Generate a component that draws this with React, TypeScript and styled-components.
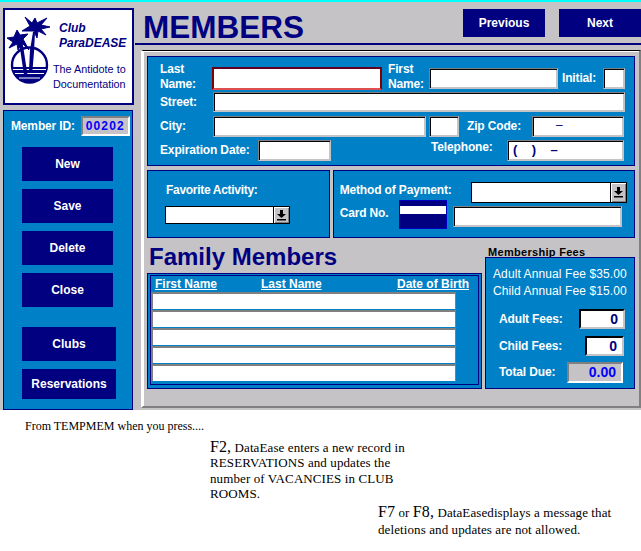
import React from "react";
import styled, { createGlobalStyle } from "styled-components";

const navy = "#000080";
const blue = "#0080c6";
const gray = "#c6c3c6";

function PalmLogo() {
  return (
    <LogoSvg viewBox="0 0 50 76" width="50" height="76">
      <circle cx="25.500" cy="53" r="17.500" fill="#fff" stroke={navy} strokeWidth="2.400" />
      <path d="M8.100 55h34.800a17.500 17.500 0 0 1-34.800 0z" fill={navy} />
      <path d="M9 57.500h33M11 61.500h29M15 66h21" stroke="#fff" strokeWidth="1.200" />
      <path d="M29 20l2 0-1 20-1.500 18-3.500 0 1-20z" fill={navy} />
      <path d="M15 30l3.500 0 5 33-3.500 0z" fill={navy} />
      <path
        d="M21 5l7 6 3-5 2 5 10-5-6 7 9 2-9 2 5 6-8-4-1 7-3-7-12 0 8-5z"
        fill={navy}
        stroke={navy}
        strokeWidth="1"
      />
      <path
        d="M13 18l3 5 8-1-5 5 6 11-7-7-4 7-1-6-8 4 4-6-6-4 7-1z"
        fill={navy}
        stroke={navy}
        strokeWidth="1"
      />
    </LogoSvg>
  );
}

function Arrow() {
  return (
    <ArrowSvg viewBox="0 0 9 11" width="9" height="11">
      <path d="M3 0h3v4h3L4.500 8 0 4h3z" fill="#000" />
      <rect x="0" y="9" width="9" height="1.500" fill="#000" />
    </ArrowSvg>
  );
}

function Select({ $width, $height }: { $width: number; $height: number }) {
  return (
    <SelectBox $width={$width} $height={$height}>
      <SelectButton>
        <Arrow />
      </SelectButton>
    </SelectBox>
  );
}

export default function App() {
  return (
    <>
      <GlobalStyle />
      <Window>
        <LeftColumn>
          <LogoBox>
            <PalmLogo />
            <BrandName>
              Club
              <br />
              ParaDEASE
            </BrandName>
            <Tagline>
              The Antidote to
              <br />
              Documentation
            </Tagline>
          </LogoBox>
          <SidePanel>
            <MemberRow>
              <Label>Member ID:</Label>
              <MemberId>00202</MemberId>
            </MemberRow>
            <NavButton>New</NavButton>
            <NavButton>Save</NavButton>
            <NavButton>Delete</NavButton>
            <NavButton>Close</NavButton>
            <NavButton $wide $top={12}>
              Clubs
            </NavButton>
            <NavButton $wide $height={30}>
              Reservations
            </NavButton>
          </SidePanel>
        </LeftColumn>

        <RightColumn>
          <TitleBar>
            <Title>MEMBERS</Title>
            <TopButton $left={160}>Previous</TopButton>
            <TopButton $left={14}>Next</TopButton>
          </TitleBar>

          <Sunken>
            <Section>
              <FormRow $height={31}>
                <Label $width={52}>
                  Last
                  <br />
                  Name:
                </Label>
                <Input $width={170} $height={23} $down={4} $focus />
                <Label $width={41} $left={6}>
                  First
                  <br />
                  Name:
                </Label>
                <Input $width={129} $height={21} $down={4} />
                <Label $width={41} $left={4} $down={3}>
                  Initial:
                </Label>
                <Input $width={22} $height={21} $down={4} />
              </FormRow>
              <FormRow $height={20}>
                <Label $width={53}>Street:</Label>
                <Input $width={412} $height={20} />
              </FormRow>
              <FormRow $height={21} $top={4}>
                <Label $width={53}>City:</Label>
                <Input $width={213} $height={21} />
                <Input $width={30} $height={21} $left={3} />
                <Label $width={65} $left={8}>
                  Zip Code:
                </Label>
                <Input $width={92} $height={21} $pad={23}>
                  –
                </Input>
              </FormRow>
              <FormRow $height={21} $top={3}>
                <Label $width={98}>Expiration Date:</Label>
                <Input $width={73} $height={21} />
                <Label $width={76} $left={100} $lift={6}>
                  Telephone:
                </Label>
                <Input $width={117} $height={21} $pad={5} $bold>
                  {"(    )    –"}
                </Input>
              </FormRow>
            </Section>

            <SplitRow>
              <ActivityCard>
                <CardLabel>Favorite Activity:</CardLabel>
                <Select $width={125} $height={18} />
              </ActivityCard>
              <PaymentCard>
                <PaymentRow $height={21}>
                  <Label $width={131} $lift={5}>
                    Method of Payment:
                  </Label>
                  <Select $width={156} $height={21} />
                </PaymentRow>
                <PaymentRow $height={24}>
                  <Label $width={59} $lift={4}>
                    Card No.
                  </Label>
                  <CardSwatch />
                  <Input $width={169} $height={21} $left={6} $down={3} />
                </PaymentRow>
              </PaymentCard>
            </SplitRow>

            <LowerRow>
              <FamilyColumn>
                <FamilyTitle>Family Members</FamilyTitle>
                <TableFrame>
                  <TableInner>
                    <TableHead>
                      <HeadCell $width={106}>First Name</HeadCell>
                      <HeadCell $width={136}>Last Name</HeadCell>
                      <HeadCell $width={70}>Date of Birth</HeadCell>
                    </TableHead>
                    {[0, 1, 2, 3, 4].map((i) => (
                      <TableRow key={i} />
                    ))}
                  </TableInner>
                </TableFrame>
              </FamilyColumn>
              <FeesColumn>
                <FeesHeading>Membership Fees</FeesHeading>
                <FeesCard>
                  <FeeNote>Adult Annual Fee $35.00</FeeNote>
                  <FeeNote>Child Annual Fee $15.00</FeeNote>
                  <FeeRow $top={9}>
                    <Label>Adult Fees:</Label>
                    <FeeValue $width={46}>0</FeeValue>
                  </FeeRow>
                  <FeeRow $top={7} $right={1}>
                    <Label>Child Fees:</Label>
                    <FeeValue $width={39}>0</FeeValue>
                  </FeeRow>
                  <FeeRow $top={6} $right={2}>
                    <Label>Total Due:</Label>
                    <FeeValue $width={56} $total>
                      0.00
                    </FeeValue>
                  </FeeRow>
                </FeesCard>
              </FeesColumn>
            </LowerRow>
          </Sunken>
        </RightColumn>
      </Window>

      <Notes>
        <Note $left={25}>From TEMPMEM when you press....</Note>
        <Note $left={210} $top={4} $size={13}>
          <Key>F2,</Key> DataEase enters a new record in
          <br />
          RESERVATIONS and updates the
          <br />
          number of VACANCIES in CLUB
          <br />
          ROOMS.
        </Note>
        <Note $left={378} $top={1} $size={13} $line={17.5}>
          <Key>F7</Key> or <Key>F8,</Key> DataEasedisplays a message that
          <br />
          deletions and updates are not allowed.
        </Note>
      </Notes>
    </>
  );
}

const GlobalStyle = createGlobalStyle`
  html, body {
    margin: 0;
    padding: 0;
    background: #ffffff;
  }
  body {
    font-family: "Liberation Sans", Arial, sans-serif;
    font-size: 12px;
  }
`;

const Window = styled.div`
  display: flex;
  width: 641px;
  height: 408px;
  background: ${gray};
  border-top: 2px solid #00ffff;
  overflow: hidden;
`;

const LeftColumn = styled.div`
  display: flex;
  flex-direction: column;
  width: 130px;
  margin-left: 3px;
  padding-top: 6px;
  flex-shrink: 0;
`;

const LogoBox = styled.div`
  position: relative;
  box-sizing: border-box;
  width: 131px;
  height: 97px;
  border: 2px solid ${navy};
  background: #ffffff;
  color: ${navy};
`;

const LogoSvg = styled.svg`
  position: absolute;
  left: -1px;
  top: 2px;
`;

const BrandName = styled.div`
  position: absolute;
  left: 54px;
  top: 11px;
  font-size: 12px;
  line-height: 15px;
  font-weight: bold;
  font-style: italic;
`;

const Tagline = styled.div`
  position: absolute;
  left: 48px;
  top: 52px;
  font-size: 10.800px;
  line-height: 14.500px;
  white-space: nowrap;
`;

const SidePanel = styled.div`
  box-sizing: border-box;
  display: flex;
  flex-direction: column;
  align-items: flex-start;
  gap: 8px;
  width: 130px;
  height: 300px;
  margin-top: 5px;
  padding: 5px 0 0 18px;
  background: ${blue};
  border: 1px solid ${navy};
`;

const MemberRow = styled.div`
  display: flex;
  align-items: center;
  justify-content: space-between;
  width: 119px;
  height: 20px;
  margin: 0 0 3px -11px;
`;

const Label = styled.span<{ $width?: number; $left?: number; $lift?: number; $down?: number }>`
  display: block;
  flex-shrink: 0;
  width: ${(p) => (p.$width ? `${p.$width}px` : "auto")};
  margin-left: ${(p) => p.$left ?? 0}px;
  margin-top: ${(p) => p.$down ?? 0}px;
  margin-bottom: ${(p) => p.$lift ?? 0}px;
  color: #ffffff;
  font-size: 12px;
  line-height: 15px;
  font-weight: bold;
  letter-spacing: -0.150px;
  white-space: nowrap;
`;

const MemberId = styled.div`
  box-sizing: border-box;
  width: 49px;
  height: 20px;
  padding-right: 3px;
  background: ${gray};
  border: 2px solid;
  border-color: #808080 #ffffff #ffffff #808080;
  color: #0000ff;
  font-size: 12px;
  font-weight: bold;
  line-height: 16px;
  letter-spacing: 1.200px;
  text-align: right;
`;

const NavButton = styled.div<{ $wide?: boolean; $top?: number; $height?: number }>`
  display: flex;
  align-items: center;
  justify-content: center;
  width: ${(p) => (p.$wide ? 94 : 91)}px;
  height: ${(p) => p.$height ?? 34}px;
  margin-top: ${(p) => p.$top ?? 0}px;
  flex-shrink: 0;
  background: ${navy};
  color: #ffffff;
  font-size: 12px;
  font-weight: bold;
`;

const RightColumn = styled.div`
  display: flex;
  flex-direction: column;
  flex: 1;
  min-width: 0;
  margin-left: 5px;
`;

const TitleBar = styled.div`
  display: flex;
  align-items: flex-start;
  flex-shrink: 0;
  height: 34px;
  margin-left: -3px;
  padding: 7px 0 0 8px;
  border-bottom: 2px solid ${navy};
`;

const Title = styled.h1`
  width: 160px;
  margin: 1px 0 0;
  color: ${navy};
  font-size: 31.500px;
  line-height: 34px;
  font-weight: bold;
  white-space: nowrap;
`;

const TopButton = styled.div<{ $left: number }>`
  display: flex;
  align-items: center;
  justify-content: center;
  width: 82px;
  height: 28px;
  margin-left: ${(p) => p.$left}px;
  flex-shrink: 0;
  background: ${navy};
  color: #ffffff;
  font-size: 12px;
  font-weight: bold;
`;

const Sunken = styled.div`
  box-sizing: border-box;
  flex: 1;
  margin: 5px 0 2px 3px;
  padding: 5px 4px 0 4px;
  border: 2px solid;
  border-color: #000000 #808080 #808080 #ffffff;
  border-top-width: 1px;
  box-shadow: inset 1px 1px 0 #ffffff;
`;

const Section = styled.div`
  box-sizing: border-box;
  height: 110px;
  padding: 4px 10px 0 12px;
  background: ${blue};
  border: 1px solid ${navy};
`;

const FormRow = styled.div<{ $height: number; $top?: number }>`
  display: flex;
  align-items: center;
  height: ${(p) => p.$height}px;
  margin-top: ${(p) => p.$top ?? 0}px;
`;

const Input = styled.div<{
  $width: number;
  $height: number;
  $left?: number;
  $down?: number;
  $pad?: number;
  $bold?: boolean;
  $focus?: boolean;
}>`
  box-sizing: border-box;
  flex-shrink: 0;
  width: ${(p) => p.$width}px;
  height: ${(p) => p.$height}px;
  margin-left: ${(p) => p.$left ?? 0}px;
  margin-top: ${(p) => p.$down ?? 0}px;
  padding-left: ${(p) => p.$pad ?? 0}px;
  background: #ffffff;
  border: ${(p) => (p.$focus ? 2 : 1)}px solid;
  border-color: ${(p) =>
    p.$focus ? "#600020 #800000 #e05050 #800000" : "#808080 #c6c3c6 #c6c3c6 #808080"};
  box-shadow: ${(p) =>
    p.$focus ? "none" : "inset 1px 1px 0 #000000, inset -1px -1px 0 #c6c3c6"};
  color: ${navy};
  font-size: ${(p) => (p.$bold ? 13 : 12)}px;
  font-weight: ${(p) => (p.$bold ? "bold" : "normal")};
  line-height: 17px;
  white-space: pre;
`;

const SplitRow = styled.div`
  display: flex;
  gap: 3px;
  margin-top: 4px;
`;

const ActivityCard = styled.div`
  box-sizing: border-box;
  width: 183px;
  height: 68px;
  padding: 12px 0 0 17px;
  background: ${blue};
  border: 1px solid ${navy};
`;

const CardLabel = styled.div`
  margin: 0 0 8px 1px;
  color: #ffffff;
  font-size: 12px;
  line-height: 15px;
  font-weight: bold;
  letter-spacing: -0.300px;
`;

const PaymentCard = styled.div`
  box-sizing: border-box;
  width: 303px;
  height: 68px;
  padding: 11px 0 0 6px;
  background: ${blue};
  border: 1px solid ${navy};
`;

const PaymentRow = styled.div<{ $height: number }>`
  display: flex;
  align-items: center;
  height: ${(p) => p.$height}px;
`;

const SelectBox = styled.div<{ $width: number; $height: number }>`
  box-sizing: border-box;
  display: flex;
  justify-content: flex-end;
  flex-shrink: 0;
  width: ${(p) => p.$width}px;
  height: ${(p) => p.$height}px;
  background: #ffffff;
  border: 1px solid #000000;
`;

const SelectButton = styled.div`
  display: flex;
  align-items: center;
  justify-content: center;
  box-sizing: border-box;
  width: 16px;
  background: ${gray};
  border-left: 1px solid #000000;
  box-shadow: inset 1px 1px 0 #ffffff, inset -1px -1px 0 #808080;
`;

const ArrowSvg = styled.svg`
  display: block;
`;

const CardSwatch = styled.div`
  box-sizing: border-box;
  flex-shrink: 0;
  align-self: flex-start;
  width: 48px;
  height: 29px;
  margin-top: -3px;
  background: linear-gradient(
    ${navy} 0,
    ${navy} 5px,
    #ffffff 5px,
    #ffffff 13px,
    ${navy} 13px
  );
  border: 1px solid #0000c0;
`;

const LowerRow = styled.div`
  display: flex;
  gap: 3px;
`;

const FamilyColumn = styled.div`
  width: 336px;
`;

const FamilyTitle = styled.h2`
  box-sizing: border-box;
  height: 30px;
  margin: 0 0 0 2px;
  padding-top: 5px;
  color: ${navy};
  font-size: 24px;
  line-height: 27px;
  font-weight: bold;
  white-space: nowrap;
`;

const TableFrame = styled.div`
  box-sizing: border-box;
  height: 116px;
  margin-top: 5px;
  padding: 1px 2px 3px;
  background: ${blue};
  border: 1px solid ${navy};
`;

const TableInner = styled.div`
  box-sizing: border-box;
  height: 100%;
  border: 1px solid ${navy};
`;

const TableHead = styled.div`
  box-sizing: border-box;
  display: flex;
  height: 16px;
  padding: 1px 0 0 4px;
`;

const HeadCell = styled.span<{ $width: number }>`
  width: ${(p) => p.$width}px;
  flex-shrink: 0;
  color: #ffffff;
  font-size: 12px;
  line-height: 15px;
  font-weight: bold;
  text-decoration: underline;
  white-space: nowrap;
`;

const TableRow = styled.div`
  box-sizing: border-box;
  width: 305px;
  height: 18px;
  background: #ffffff;
  border-top: 2px solid #808080;
  border-left: 2px solid #808080;
  border-right: 1px solid #808080;
  border-bottom: 1px solid ${blue};
`;

const FeesColumn = styled.div`
  display: flex;
  flex-direction: column;
  width: 150px;
`;

const FeesHeading = styled.div`
  height: 14px;
  margin: 5px 0 0 3px;
  color: #000000;
  font-size: 11px;
  line-height: 18px;
  font-weight: bold;
  letter-spacing: 0.300px;
`;

const FeesCard = styled.div`
  box-sizing: border-box;
  height: 132px;
  padding: 8px 9px 0 7px;
  background: ${blue};
  border: 1px solid ${navy};
`;

const FeeNote = styled.div`
  color: #ffffff;
  font-size: 12px;
  line-height: 17px;
  letter-spacing: 0.100px;
  white-space: nowrap;
`;

const FeeRow = styled.div<{ $top: number; $right?: number }>`
  display: flex;
  align-items: center;
  justify-content: space-between;
  margin-top: ${(p) => p.$top}px;
  padding: 0 ${(p) => p.$right ?? 0}px 0 6px;
`;

const FeeValue = styled.div<{ $width: number; $total?: boolean }>`
  box-sizing: border-box;
  width: ${(p) => p.$width}px;
  height: ${(p) => (p.$total ? 21 : 20)}px;
  padding-right: 5px;
  background: ${(p) => (p.$total ? gray : "#ffffff")};
  border: 2px solid;
  border-color: ${(p) =>
    p.$total ? "#808080 #ffffff #ffffff #808080" : "#000000 #c6c3c6 #c6c3c6 #000000"};
  color: ${(p) => (p.$total ? "#0000ff" : navy)};
  font-size: 14px;
  line-height: 16px;
  font-weight: bold;
  text-align: right;
`;

const Notes = styled.div`
  padding-top: 9px;
  font-family: "Liberation Serif", "Times New Roman", serif;
  color: #000000;
`;

const Note = styled.p<{ $left: number; $top?: number; $size?: number; $line?: number }>`
  margin: ${(p) => p.$top ?? 0}px 0 0 ${(p) => p.$left}px;
  font-size: ${(p) => p.$size ?? 12}px;
  line-height: ${(p) => p.$line ?? 15.5}px;
  letter-spacing: ${(p) => (p.$size ? 0.1 : 0)}px;
  white-space: nowrap;
`;

const Key = styled.span`
  font-size: 16px;
`;
